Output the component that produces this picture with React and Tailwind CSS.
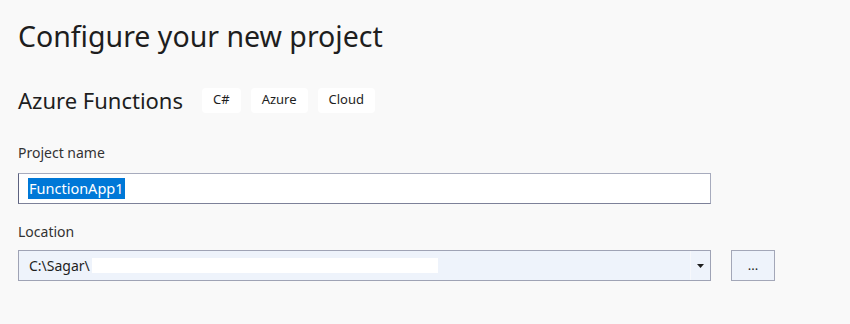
function Tag({ children }) {
  return (
    <span className="flex h-[25px] items-center rounded-[4px] bg-white px-[11px] text-[13px] text-[#1e1e1e]">
      {children}
    </span>
  )
}

export default function App() {
  return (
    <div
      className="h-[324px] w-[850px] bg-[#f9f9f9] pl-[18px] pt-[17px] text-[#1e1e1e]"
      style={{ fontFamily: '"Noto Sans", "Open Sans", sans-serif' }}
    >
      <h1 className="text-[28.5px] leading-[38px] font-normal">Configure your new project</h1>

      <div className="mt-[31px] flex items-center">
        <h2 className="text-[22px] leading-[28px] font-normal">Azure Functions</h2>
        <div className="ml-[19px] flex gap-[10px]">
          <Tag>C#</Tag>
          <Tag>Azure</Tag>
          <Tag>Cloud</Tag>
        </div>
      </div>

      <div className="mt-[29px] text-[14px] leading-[20px] text-[#333]">Project name</div>
      <div className="mt-[10px] flex h-[31px] w-[693px] items-center border border-[#a7abbd] border-l-[#5d6280] border-b-[#7d8199] bg-white pl-[9px]">
        <span className="bg-[#0078d7] px-[1px] text-[14.5px] leading-[21px] text-white">FunctionApp1</span>
      </div>

      <div className="mt-[18px] text-[14px] leading-[20px] text-[#333]">Location</div>
      <div className="mt-[8px] flex items-center gap-[20px]">
        <div className="flex h-[31px] w-[693px] items-center border border-[#9fa3b5] bg-[#eef3fb]">
          <span className="pl-[10px] text-[14px] text-[#1e1e1e]">C:\Sagar\</span>
          <span className="ml-[2px] h-[15px] w-[346px] bg-white" />
          <div className="flex-1" />
          <div className="flex h-full w-[20px] items-center justify-center border-l border-[#f6f8fc]">
            <svg width="7" height="4" viewBox="0 0 7 4">
              <path d="M0 0h7L3.5 4z" fill="#1e1e1e" />
            </svg>
          </div>
        </div>
        <button className="flex h-[31px] w-[44px] items-center justify-center border border-[#a3a7b8] bg-[#eef3fb] text-[13px] leading-none text-[#1e1e1e]">
          ...
        </button>
      </div>
    </div>
  )
}
